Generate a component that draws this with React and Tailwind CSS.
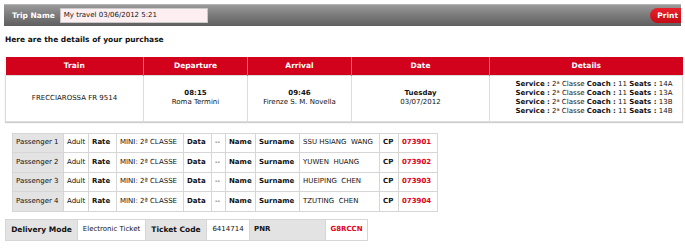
import React from 'react';

const trip = {
    train: 'FRECCIAROSSA FR 9514',
    depTime: '08:15',
    depStation: 'Roma Termini',
    arrTime: '09:46',
    arrStation: 'Firenze S. M. Novella',
    day: 'Tuesday',
    date: '03/07/2012',
    seats: ['14A', '13A', '13B', '14B'],
};

const passengers = [
    { n: 1, name: 'SSU HSIANG  WANG', cp: '073901' },
    { n: 2, name: 'YUWEN  HUANG', cp: '073902' },
    { n: 3, name: 'HUEIPING  CHEN', cp: '073903' },
    { n: 4, name: 'TZUTING  CHEN', cp: '073904' },
];

const cell = 'border border-[#d6d6d6] px-[3px] whitespace-pre';

const App = () => {
    return (
        <div className="w-[685px] h-[248px] bg-white text-[#111] text-[7px] leading-[9px] overflow-hidden" style={{ fontFamily: '"DejaVu Sans", Tahoma, Verdana, sans-serif' }}>
            <div className="pt-[4px] px-[4px]">
                <div className="flex items-center justify-between h-[22px] bg-gradient-to-b from-[#9a9a9a] via-[#7a7a7a] to-[#5f5f5f] border-t border-[#b5b5b5]">
                    <div className="flex items-center">
                        <span className="pl-[8px] pr-[5px] font-bold text-white text-[7.5px]">Trip Name</span>
                        <div className="w-[148px] h-[15px] bg-[#fdeef1] border border-[#c9c9c9] flex items-center px-[3px] text-[7px]">
                            My travel 03/06/2012 5:21
                        </div>
                    </div>
                    <button className="h-[15px] w-[31px] rounded-l-full bg-gradient-to-b from-[#e8202c] to-[#c50a17] text-white font-bold text-[7.5px] pr-[3px] text-right">
                        Print
                    </button>
                </div>
            </div>

            <p className="pl-[5px] mt-[9px] font-bold text-[7.5px]">Here are the details of your purchase</p>

            <table className="ml-[5px] mt-[13px] w-[677px] table-fixed border-collapse shadow-[0_1px_1px_#cfcfcf]">
                <colgroup>
                    <col className="w-[138px]" />
                    <col className="w-[104px]" />
                    <col className="w-[104px]" />
                    <col className="w-[138px]" />
                    <col className="w-[193px]" />
                </colgroup>
                <thead>
                    <tr className="h-[18px] bg-[#d2021c] text-white font-bold text-[7.5px]">
                        {['Train', 'Departure', 'Arrival', 'Date', 'Details'].map((h, i) => (
                            <th key={h} className={`text-center ${i > 0 ? 'border-l border-[#e56a78]' : ''}`}>{h}</th>
                        ))}
                    </tr>
                </thead>
                <tbody>
                    <tr className="h-[46px] text-center">
                        <td className="border border-[#dcdcdc]">{trip.train}</td>
                        <td className="border border-[#dcdcdc]">
                            <div className="font-bold">{trip.depTime}</div>
                            <div>{trip.depStation}</div>
                        </td>
                        <td className="border border-[#dcdcdc]">
                            <div className="font-bold">{trip.arrTime}</div>
                            <div>{trip.arrStation}</div>
                        </td>
                        <td className="border border-[#dcdcdc]">
                            <div className="font-bold">{trip.day}</div>
                            <div>{trip.date}</div>
                        </td>
                        <td className="border border-[#dcdcdc] pl-[16px]">
                            {trip.seats.map(s => (
                                <div key={s} className="whitespace-nowrap">
                                    <b>Service :</b> 2<sup className="text-[5px]">a</sup> Classe <b>Coach :</b> 11 <b>Seats :</b> {s}
                                </div>
                            ))}
                        </td>
                    </tr>
                </tbody>
            </table>

            <table className="ml-[12px] mt-[11px] w-[425px] table-fixed border-collapse">
                <colgroup>
                    <col className="w-[51px]" />
                    <col className="w-[25px]" />
                    <col className="w-[28px]" />
                    <col className="w-[67px]" />
                    <col className="w-[28px]" />
                    <col className="w-[14px]" />
                    <col className="w-[30px]" />
                    <col className="w-[44px]" />
                    <col className="w-[80px]" />
                    <col className="w-[19px]" />
                    <col className="w-[39px]" />
                </colgroup>
                <tbody>
                    {passengers.map(p => (
                        <tr key={p.n} className="h-[19.5px]">
                            <td className={`${cell} bg-[#e3e3e3]`}>Passenger {p.n}</td>
                            <td className={cell}>Adult</td>
                            <td className={`${cell} font-bold`}>Rate</td>
                            <td className={cell}>MINI: 2ª CLASSE</td>
                            <td className={`${cell} font-bold`}>Data</td>
                            <td className={cell}>--</td>
                            <td className={`${cell} font-bold`}>Name</td>
                            <td className={`${cell} font-bold`}>Surname</td>
                            <td className={cell}>{p.name}</td>
                            <td className={`${cell} font-bold`}>CP</td>
                            <td className={`${cell} font-bold text-[#e3001b]`}>{p.cp}</td>
                        </tr>
                    ))}
                </tbody>
            </table>

            <table className="ml-[5px] mt-[7px] w-[362px] table-fixed border-collapse">
                <colgroup>
                    <col className="w-[72px]" />
                    <col className="w-[68px]" />
                    <col className="w-[61px]" />
                    <col className="w-[43px]" />
                    <col className="w-[76px]" />
                    <col className="w-[42px]" />
                </colgroup>
                <tbody>
                    <tr className="h-[21px]">
                        <td className="border border-[#d6d6d6] bg-[#e3e3e3] font-bold text-center text-[7.5px]">Delivery Mode</td>
                        <td className="border border-[#d6d6d6] text-center">Electronic Ticket</td>
                        <td className="border border-[#d6d6d6] bg-[#e3e3e3] font-bold text-center text-[7.5px]">Ticket Code</td>
                        <td className="border border-[#d6d6d6] text-center">6414714</td>
                        <td className="border border-[#d6d6d6] bg-[#e3e3e3] font-bold pl-[4px]">PNR</td>
                        <td className="border border-[#d6d6d6] text-center font-bold text-[#e3001b]">G8RCCN</td>
                    </tr>
                </tbody>
            </table>
        </div>
    );
};

export default App;
